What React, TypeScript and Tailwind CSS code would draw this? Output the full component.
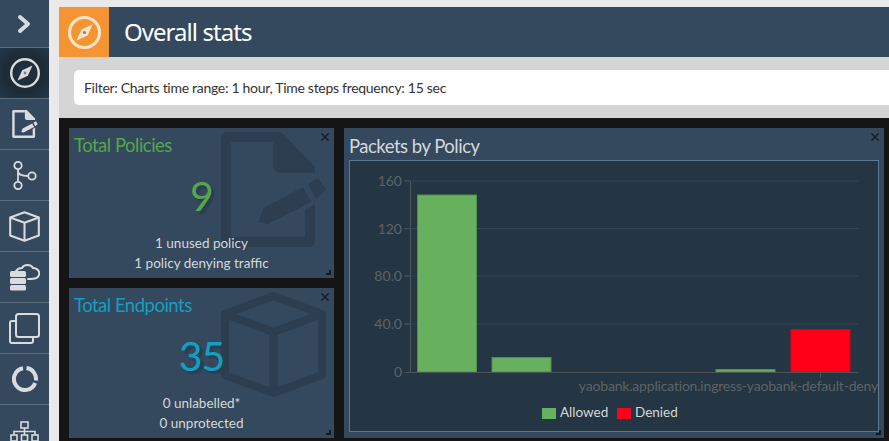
import React from "react";

const rows = ["h-[48px]", "h-[51px]", "h-[51px]", "h-[51px]", "h-[51px]", "h-[51px]", "h-[51px]", "h-[51px]", "h-[51px]"];

function Compass({ size, sw }: { size: number; sw: number }) {
  return (
    <svg width={size} height={size} viewBox="0 0 32 32" fill="none">
      <circle cx="16" cy="16" r={16 - sw / 2} stroke="currentColor" strokeWidth={sw} />
      <path d="M24 8 L19 19 L8 24 L13 13 Z" fill="currentColor" />
      <circle cx="16" cy="16" r="1.5" fill="#34495e" opacity="0.6" />
    </svg>
  );
}

function FileEdit({ w, h }: { w: number; h: number }) {
  return (
    <svg width={w} height={h} viewBox="0 0 105 115" fill="currentColor">
      <path d="M6 0H52V10H10V105H84V78L94 72V109a6 6 0 0 1-6 6H6a6 6 0 0 1-6-6V6a6 6 0 0 1 6-6z" />
      <path d="M52 0H60L94 35V41H60a8 8 0 0 1-8-8z" />
      <path d="M37 90L43 76L82 55L90 70L47 92z" />
      <path d="M87 52L97 46L105 58L95 67z" />
    </svg>
  );
}

function Cube({ size, sw }: { size: number; sw: number }) {
  return (
    <svg width={size} height={size} viewBox="0 0 105 105" fill="none" stroke="currentColor" strokeWidth={sw} strokeLinejoin="round">
      <path d="M52.5 4L101 22V83L52.5 101L4 83V22Z" />
      <path d="M4 22L52.5 40L101 22M52.5 40V101" />
    </svg>
  );
}

function SideIcons({ i }: { i: number }) {
  switch (i) {
    case 0:
      return (
        <svg width="16" height="20" viewBox="0 0 16 20" fill="none" stroke="currentColor" strokeWidth="4" strokeLinecap="round" strokeLinejoin="round">
          <path d="M3 3L11 10L3 17" />
        </svg>
      );
    case 1:
      return <Compass size={30} sw={2.6} />;
    case 2:
      return <FileEdit w={26} h={28} />;
    case 3:
      return (
        <svg width="24" height="29" viewBox="0 0 24 29" fill="none" stroke="currentColor" strokeWidth="1.8">
          <circle cx="5" cy="4.5" r="3.7" />
          <circle cx="19" cy="15" r="3.7" />
          <circle cx="5" cy="24.5" r="3.7" />
          <path d="M5 8.2V20.8M5 10C5 14 10 15 15.3 15" />
        </svg>
      );
    case 4:
      return <Cube size={31} sw={7} />;
    case 5:
      return (
        <svg width="30" height="30" viewBox="0 0 30 30" fill="none">
          <path d="M6 9C8 6 10 6 12 6C14 2 21 2 23 6C28 6 30 10 29 13C28 16 26 17 18 17" stroke="currentColor" strokeWidth="2" strokeLinecap="round" />
          <rect x="0" y="9" width="16" height="6" rx="1.5" fill="currentColor" />
          <rect x="0" y="16" width="16" height="6" rx="1.5" fill="currentColor" />
          <rect x="0" y="23" width="16" height="5.5" rx="1.5" fill="currentColor" />
        </svg>
      );
    case 6:
      return (
        <svg width="31" height="31" viewBox="0 0 31 31" fill="none" stroke="currentColor" strokeWidth="2">
          <rect x="7" y="1" width="23" height="23" rx="2.5" />
          <path d="M7 8H3a2 2 0 0 0-2 2V28a2 2 0 0 0 2 2H22a2 2 0 0 0 2-2V24" />
        </svg>
      );
    case 7:
      return (
        <svg width="26" height="26" viewBox="0 0 26 26" fill="none" stroke="currentColor" strokeWidth="4">
          <path d="M14.5 2.1A11 11 0 0 1 23.9 14.5" />
          <path d="M23.2 17A11 11 0 1 1 11 2.2" />
        </svg>
      );
    default:
      return (
        <svg className="mt-[12px]" width="30" height="30" viewBox="0 0 30 30" fill="none" stroke="currentColor" strokeWidth="1.6">
          <rect x="11" y="1" width="7" height="6" />
          <rect x="1" y="14" width="6" height="6" />
          <rect x="11.5" y="14" width="6" height="6" />
          <rect x="22" y="14" width="6" height="6" />
          <path d="M14.5 7V14M4 14V10.5H25V14" />
        </svg>
      );
  }
}

function Sidebar() {
  return (
    <div className="w-[49px] shrink-0 bg-[#34495e] flex flex-col text-[#d8dcdf]">
      {rows.map((r, i) => (
        <div
          key={i}
          className={`${r} shrink-0 flex items-center justify-center border-b border-[#5a6d7d] ${
            i === 1 ? "bg-[radial-gradient(circle,#22323f_0%,#1c2b36_55%,#25384a_100%)]" : ""
          }`}
        >
          <SideIcons i={i} />
        </div>
      ))}
    </div>
  );
}

function CloseMark() {
  return (
    <svg className="absolute right-[5px] top-[5px]" width="8" height="8" viewBox="0 0 8 8" stroke="#111c24" strokeWidth="1.2" fill="none">
      <path d="M0.5 0.5L7.5 7.5M7.5 0.5L0.5 7.5" />
    </svg>
  );
}

function Corner() {
  return <div className="absolute right-[3px] bottom-[3px] w-[5px] h-[5px] border-r-2 border-b-2 border-[#10181f]" />;
}

function StatCard({ title, value, lines, color, icon }: { title: string; value: string; lines: string[]; color: string; icon: React.ReactNode }) {
  return (
    <div className="relative h-[150px] w-[265px] bg-[#34495e] overflow-hidden">
      <div className="absolute left-[152px] top-[4px] text-[#2c3e4f]">{icon}</div>
      <div className="relative flex flex-col h-full">
        <div className={`pl-[5px] pt-[4px] text-[18.5px] leading-[27px] tracking-[-0.5px] ${color}`}>{title}</div>
        <div className={`text-center mt-[13px] text-[41px] leading-[48px] tracking-[-1px] [text-shadow:3px_3px_1px_#2c3e4f] ${color}`}>{value}</div>
        <div className="text-center mt-[13px] text-[13.5px] leading-[20px] text-[#d5d8da]">
          {lines.map((l) => (
            <div key={l}>{l}</div>
          ))}
        </div>
      </div>
      <CloseMark />
      <Corner />
    </div>
  );
}

function Chart() {
  const grid = [
    { y: 181, l: "160" },
    { y: 228.5, l: "120" },
    { y: 276, l: "80.0" },
    { y: 324, l: "40.0" },
  ];
  const bars = [
    { x: 417.5, y: 195, w: 59, c: "#66b05e", s: "#4f9148" },
    { x: 492, y: 357.5, w: 59, c: "#66b05e", s: "#4f9148" },
    { x: 716, y: 369.5, w: 59, c: "#66b05e", s: "#4f9148" },
    { x: 791, y: 329.5, w: 59, c: "#ff0018", s: "#e00016" },
  ];
  return (
    <svg className="block" width="528" height="270" viewBox="350 161 528 270" fontFamily="Lato, sans-serif">
      {grid.map((g) => (
        <g key={g.l}>
          <path d={`M404.5 ${g.y}H858`} stroke="#34495a" strokeWidth="1" />
          <path d={`M404.5 ${g.y}H410`} stroke="#4d5357" strokeWidth="1" />
          <text x="402" y={g.y + 5} textAnchor="end" fontSize="14" fill="#5d6468">
            {g.l}
          </text>
        </g>
      ))}
      <path d="M410.5 181V372" stroke="#4d5357" strokeWidth="1.2" />
      {bars.map((b, i) => (
        <rect key={i} x={b.x} y={b.y} width={b.w} height={372 - b.y} fill={b.c} stroke={b.s} strokeWidth="1" />
      ))}
      <path d="M404.5 372.5H858M820.5 372V378" stroke="#4d5357" strokeWidth="1.2" />
      <text x="402" y="377" textAnchor="end" fontSize="14" fill="#5d6468">
        0
      </text>
      <text x="878" y="391" textAnchor="end" fontSize="14" letterSpacing="-0.19" fill="#5d6468">
        yaobank.application.ingress-yaobank-default-deny
      </text>
      <rect x="542" y="408" width="14" height="11" fill="#66b05e" />
      <text x="560" y="417" fontSize="13.5" fill="#d5d8da">
        Allowed
      </text>
      <rect x="617" y="408" width="14" height="11" fill="#ff0018" />
      <text x="635" y="417" fontSize="13.5" fill="#d5d8da">
        Denied
      </text>
    </svg>
  );
}

export default function App() {
  return (
    <div className="h-[441px] w-[889px] overflow-hidden flex bg-[#e9e9e9] font-['Lato',sans-serif]">
      <Sidebar />
      <div className="ml-[10px] mt-[7px] flex-1 min-w-0 flex flex-col">
        <div className="h-[50px] shrink-0 flex bg-[#34495e]">
          <div className="w-[50px] bg-[#f59432] flex items-center justify-center text-[#fde4c8]">
            <Compass size={33} sw={3} />
          </div>
          <div className="pl-[15px] flex items-center text-white text-[24px] tracking-[-0.95px] font-['Noto_Sans',sans-serif]">Overall stats</div>
        </div>
        <div className="h-[61px] shrink-0 bg-[#d5d5d5] pl-[15px] pt-[13px]">
          <div className="h-[35px] bg-white rounded-l-[5px] pl-[10px] flex items-center text-[14px] tracking-[-0.29px] text-[#333]">
            Filter: Charts time range: 1 hour, Time steps frequency: 15 sec
          </div>
        </div>
        <div className="flex-1 bg-[#151515] flex gap-[10px] pl-[10px] pt-[10px]">
          <div className="flex flex-col gap-[10px]">
            <StatCard title="Total Policies" value="9" lines={["1 unused policy", "1 policy denying traffic"]} color="text-[#55a64b]" icon={<FileEdit w={105} h={115} />} />
            <StatCard title="Total Endpoints" value="35" lines={["0 unlabelled*", "0 unprotected"]} color="text-[#139fc1]" icon={<Cube size={105} sw={8} />} />
          </div>
          <div className="relative w-[540px] h-[310px] bg-[#34495e] px-[5px] flex flex-col">
            <div className="h-[32px] shrink-0 pt-[2px] text-[18.5px] leading-[32px] tracking-[-0.5px] text-[#d5d8da]">Packets by Policy</div>
            <div className="w-[530px] h-[272px] bg-[#243543] border border-[#5f7a8e]">
              <Chart />
            </div>
            <CloseMark />
            <Corner />
          </div>
        </div>
      </div>
    </div>
  );
}
